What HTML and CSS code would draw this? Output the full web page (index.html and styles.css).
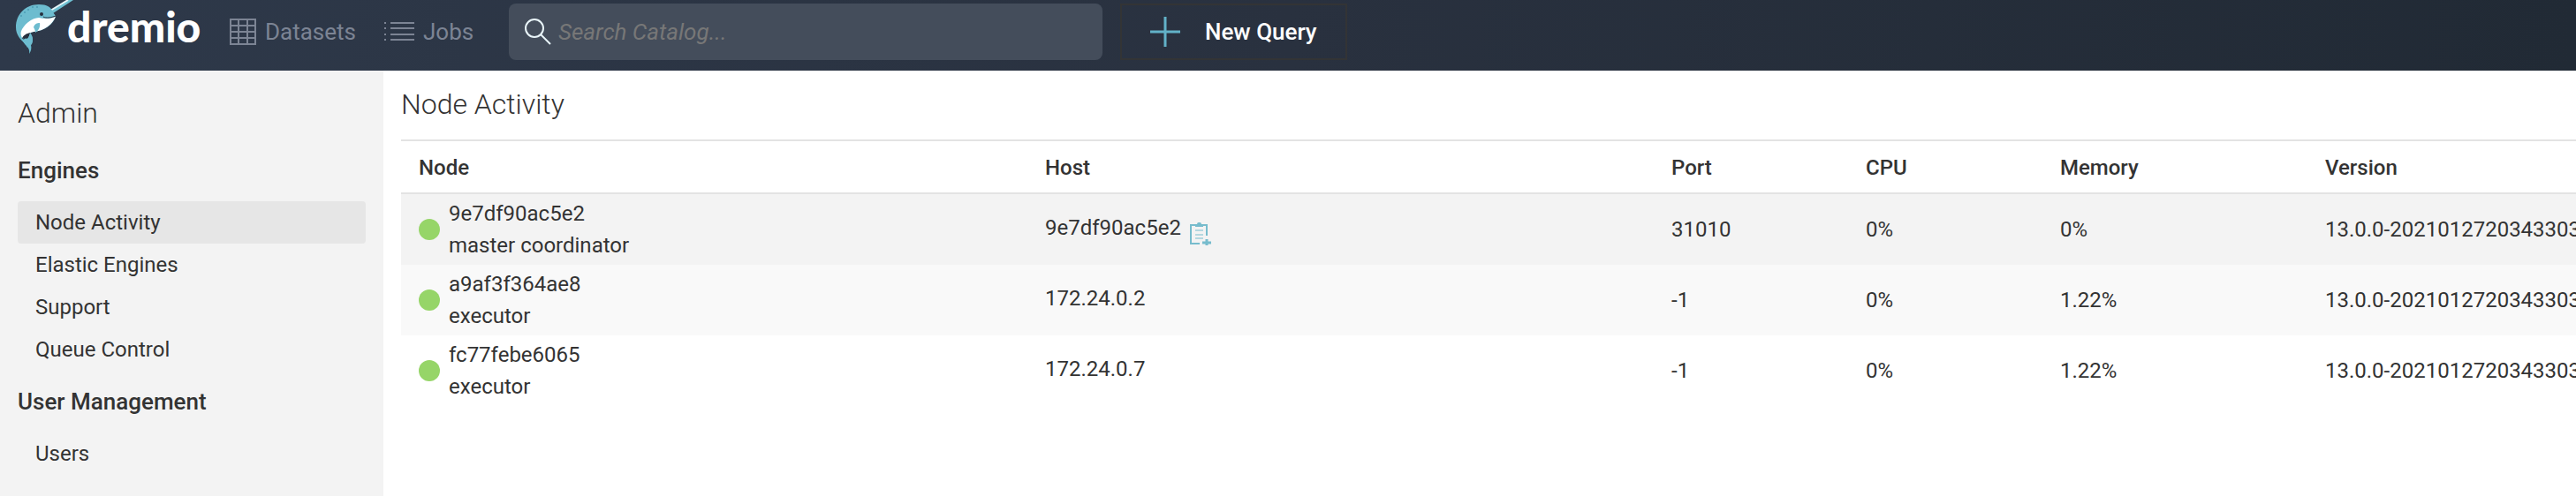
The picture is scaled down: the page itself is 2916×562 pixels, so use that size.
FILE: index.html
```
<!DOCTYPE html>
<html lang="en">
<head>
<meta charset="utf-8">
<title>Node Activity</title>
<link rel="stylesheet" href="styles.css">
</head>
<body>
<header class="topbar">
  <a class="brand" href="#" aria-label="dremio">
    <svg class="brand-mark" viewBox="0 0 66 64" aria-hidden="true">
      <path d="M39 12 59 0h6L42 15z" fill="#6fc0d2"/>
      <path d="M39 12 59 0" stroke="#e8f5f8" stroke-width="2"/>
      <path d="M15 61c1-4-1-7-4-11C5 45 0 39 0 31 0 16 11 5 26 5c9 0 14 3 16 9l3 4c-2 9-12 17-25 18-4 1-6 2-7 4-3 2-5 3-5 5 2-1 5-2 8-8 2 2 3 5 3 8 0 2-1 4-2 6 1 4 0 7-2 10z" fill="#6dbccf"/>
      <path d="M45 19c-4 9-13 16-25 17-6 1-8 5-13 7-2-3-2-7 0-10 5-8 11-12 19-13 7 2 14 1 19-1z" fill="#fff"/>
      <path d="M7 44c1-4 5-6 9-7-1 3-1 5-3 7-2-1-4-1-6 0z" fill="#27303e"/>
      <path d="M27 26c-3 0-6 1-7 5 1 2 2 3 2 6 3-2 6-6 5-11zM16 38c-1 4-3 7-8 8 1 4 4 5 5 8l5-4c2-4 1-9-2-12z" fill="#6dbccf"/>
      <path d="M31 19c3 2 9 1 14-1" stroke="#27303e" fill="none"/>
      <circle cx="29" cy="16" r="2" fill="#27303e"/>
      <g fill="#4d9db4"><circle cx="19" cy="8" r="1"/><circle cx="14" cy="11" r="1"/><circle cx="10" cy="14" r="1"/><circle cx="24" cy="8" r="1"/><circle cx="6" cy="18" r="1"/></g>
    </svg>
    <span class="brand-name">dremio</span>
  </a>
  <nav class="topnav">
    <a class="topnav-link" href="#">
      <svg class="icon-grid" viewBox="0 0 30 30" fill="none" stroke="currentColor" stroke-width="2" aria-hidden="true"><path d="M1 1h28v28H1zM1 8h28M1 15h28M1 22h28M10 1v28M20 1v28"/></svg>
      Datasets
    </a>
    <a class="topnav-link" href="#">
      <svg class="icon-list" viewBox="0 0 34 30" fill="none" stroke="currentColor" stroke-width="2" aria-hidden="true"><path d="M0 5h2M0 11h2M0 18h2M0 24h2M7 5h27M7 11h27M7 18h27M7 24h27"/></svg>
      Jobs
    </a>
  </nav>
  <label class="search">
    <svg class="icon-search" viewBox="0 0 30 30" fill="none" stroke="#e9f5f9" stroke-width="2" aria-hidden="true"><circle cx="11" cy="11" r="10"/><path d="m18 18 11 11"/></svg>
    <input class="search-input" type="search" placeholder="Search Catalog..." aria-label="Search Catalog">
  </label>
  <button class="new-query" type="button">
    <svg class="icon-plus" viewBox="0 0 34 34" stroke="#62b2c8" stroke-width="3" aria-hidden="true"><path d="M17 0v34M0 17h34"/></svg>
    New Query
  </button>
</header>
<div class="layout">
  <aside class="sidebar">
    <h2 class="title">Admin</h2>
    <h3 class="group-title">Engines</h3>
    <ul class="menu">
      <li><a class="menu-item active" href="#">Node Activity</a></li>
      <li><a class="menu-item" href="#">Elastic Engines</a></li>
      <li><a class="menu-item" href="#">Support</a></li>
      <li><a class="menu-item" href="#">Queue Control</a></li>
    </ul>
    <h3 class="group-title">User Management</h3>
    <ul class="menu">
      <li><a class="menu-item" href="#">Users</a></li>
    </ul>
  </aside>
  <main class="content">
    <h1 class="title">Node Activity</h1>
    <table class="nodes">
      <thead>
        <tr><th>Node</th><th>Host</th><th class="col-metric">Port</th><th class="col-metric">CPU</th><th class="col-memory">Memory</th><th class="col-version">Version</th></tr>
      </thead>
      <tbody>
        <tr class="hovered">
          <td><div class="node"><span class="status"></span><span>9e7df90ac5e2<br>master coordinator</span></div></td>
          <td><div class="host">9e7df90ac5e2
            <button class="copy" type="button" aria-label="Copy host"><svg class="icon-copy" viewBox="0 0 24 26" fill="none" stroke="#77bccd" aria-hidden="true"><path d="M19 15V3H1v21h10" stroke-width="2"/><path d="M6 5V2h2q0-2 2-2h1q2 0 2 2h2v3z" fill="#77bccd" stroke="none"/><path d="M6 9h9M6 14h9M6 18h9"/><path d="M19 19v7M14 23h10" stroke-width="3"/></svg></button></div></td>
          <td>31010</td><td>0%</td><td>0%</td><td>13.0.0-2021012720343303</td>
        </tr>
        <tr class="striped">
          <td><div class="node"><span class="status"></span><span>a9af3f364ae8<br>executor</span></div></td>
          <td><div class="host">172.24.0.2</div></td>
          <td>-1</td><td>0%</td><td>1.22%</td><td>13.0.0-2021012720343303</td>
        </tr>
        <tr>
          <td><div class="node"><span class="status"></span><span>fc77febe6065<br>executor</span></div></td>
          <td><div class="host">172.24.0.7</div></td>
          <td>-1</td><td>0%</td><td>1.22%</td><td>13.0.0-2021012720343303</td>
        </tr>
      </tbody>
    </table>
  </main>
</div>
</body>
</html>
```
FILE: styles.css
```
* { box-sizing: border-box; }
body {
  margin: 0;
  min-height: 100vh;
  display: flex;
  flex-direction: column;
  background: #fff;
  color: #333;
  font: 24px/36px Roboto, "Liberation Sans", sans-serif;
}
a { color: inherit; text-decoration: none; }
button { font: inherit; color: inherit; background: none; cursor: pointer; }
svg { display: block; flex: none; }

.topbar {
  height: 80px;
  padding: 4px 0 12px 18px;
  display: flex;
  background: linear-gradient(90deg, #2e394a, #29313f 50%, #212a35);
  font-size: 26px;
}
.brand { display: flex; width: 242px; margin-top: -4px; }
.brand-mark { width: 66px; height: 64px; }
.brand-name {
  margin-left: -8px;
  color: #fff;
  font: 900 48px/60px Lato, "Open Sans", sans-serif;
}
.topnav { display: flex; align-items: center; gap: 32px; width: 316px; color: #7c8494; }
.topnav-link { display: flex; align-items: center; gap: 10px; }
.icon-grid { width: 30px; height: 30px; }
.icon-list { width: 34px; height: 30px; }
.search {
  display: flex;
  align-items: center;
  gap: 8px;
  width: 672px;
  padding: 0 18px;
  border-radius: 8px;
  background: #444d5b;
}
.icon-search { width: 30px; height: 30px; }
.search-input {
  flex: 1;
  min-width: 0;
  padding: 0;
  border: 0;
  outline: 0;
  background: none;
  color: #fff;
  font: inherit;
}
.search-input::placeholder { color: #777; font-style: italic; }
.new-query {
  display: flex;
  align-items: center;
  gap: 28px;
  margin-left: 20px;
  padding: 0 32px;
  border: 2px solid #333435;
  color: #fff;
  font-weight: 500;
}
.icon-plus { width: 34px; height: 34px; }

.layout { flex: 1; display: flex; }
.sidebar { width: 434px; padding: 28px 20px 20px; background: #f3f3f3; }
.title { margin: 0; font-size: 32px; line-height: 40px; font-weight: 300; }
.sidebar .title { margin-bottom: 10px; }
.group-title { margin: 0; padding: 17px 0; font-size: 26px; line-height: 36px; font-weight: 500; }
.menu { margin: 0; padding: 0; list-style: none; }
.menu-item { display: block; padding: 6px 20px; border-radius: 4px; }
.active { background: #e6e6e6; }

.content { flex: 1; min-width: 0; padding: 18px 0 0 20px; overflow: hidden; }
.nodes {
  width: 100%;
  margin-top: 20px;
  border-top: 2px solid #e3e3e3;
  border-spacing: 0;
  table-layout: fixed;
}
.nodes th {
  padding: 12px 20px 10px;
  border-bottom: 2px solid #e3e3e3;
  font-weight: 500;
  text-align: left;
}
.nodes td { padding: 4px 0 4px 20px; white-space: nowrap; }
.col-metric { width: 220px; }
.col-memory { width: 300px; }
.col-version { width: 304px; }
.hovered { background: #f3f3f3; }
.striped { background: #f9f9f9; }
.node { display: flex; align-items: center; gap: 10px; }
.status { width: 24px; height: 24px; border-radius: 50%; background: #96d568; }
.host { display: flex; gap: 10px; padding-bottom: 4px; }
.copy { margin: 0; padding: 12px 0 0; border: 0; height: 36px; }
.icon-copy { width: 24px; height: 26px; }
```
